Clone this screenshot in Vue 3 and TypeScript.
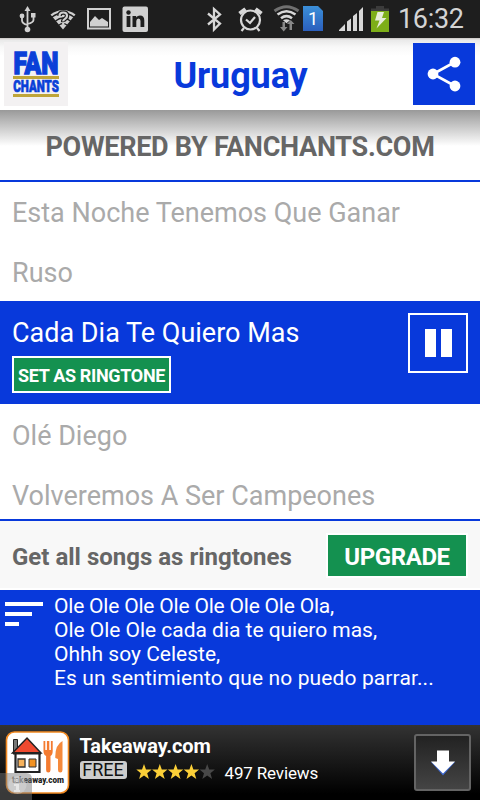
<script setup lang="ts">
interface Song {
  title: string
  active?: boolean
}

const songs: Song[] = [
  { title: 'Esta Noche Tenemos Que Ganar' },
  { title: 'Ruso' },
  { title: 'Cada Dia Te Quiero Mas', active: true },
  { title: 'Olé Diego' },
  { title: 'Volveremos A Ser Campeones' },
]

const lyrics: string[] = [
  'Ole Ole Ole Ole Ole Ole Ole Ola,',
  'Ole Ole Ole cada dia te quiero mas,',
  'Ohhh soy Celeste,',
  'Es un sentimiento que no puedo parrar...',
]

const rating = 4
</script>

<template>
  <div class="screen">
    <div class="status">
      <svg class="status-icons" width="480" height="38" viewBox="0 0 480 38">
        <g fill="none" stroke="#d0d0d0" stroke-width="1.800">
          <path d="M27.500 10V30M22 17v3.500q0 3 5.500 4.500M33.500 17v3q0 2.500-6 4" />
        </g>
        <g fill="#d0d0d0">
          <path d="M27.500 6l3 5h-6z" />
          <circle cx="22" cy="16" r="2.400" />
          <path d="M31 13h4.500v4.500H31z" />
          <circle cx="27.500" cy="29.500" r="2.800" />
        </g>
        <path d="M50.500 14.500Q63 5.500 75.500 14.500L63 29.500z" fill="#d0d0d0" />
        <path d="M52 17q11-8 22 0M55.500 21q7.500-6 15 0M59 25q4-3 8 0" fill="none" stroke="#1e1e1e" stroke-width="1.300" />
        <path d="M59.500 16q0-3.500 3.800-3.500t3.700 3.200q0 2-2 3.200t-1.800 3" fill="none" stroke="#1e1e1e" stroke-width="4.500" />
        <path d="M59.500 16q0-3.500 3.800-3.500t3.700 3.200q0 2-2 3.200t-1.800 2.500M63.200 23v2.500" fill="none" stroke="#d0d0d0" stroke-width="2.200" />
        <rect x="88" y="9" width="22" height="19.500" fill="none" stroke="#d0d0d0" stroke-width="2" />
        <path d="M90 26.500V22l5-6 4 4 3-2 6 4v4.500z" fill="#d0d0d0" />
        <rect x="122.500" y="6.500" width="25.500" height="25.500" rx="2" fill="#d0d0d0" />
        <g fill="#1e1e1e">
          <circle cx="128.500" cy="12.500" r="2.200" />
          <path d="M126.600 16h3.800v11h-3.800zM132.500 16h3.700v1.500q1.300-2 3.800-2 4.300 0 4.300 5V27h-3.800v-6q0-2.500-2-2.500t-2.200 2.500v6h-3.800z" />
        </g>
        <path d="M208 13.500l12 10-6 6V9l6 5.500-12 10" fill="none" stroke="#d8d8d8" stroke-width="2.300" />
        <g fill="none" stroke="#d8d8d8" stroke-width="2.200">
          <circle cx="250.500" cy="20" r="9.500" />
          <path d="M246 19.500l4 3.500 5-6M244 28l-2.500 3M257 28l2.500 3" />
          <path d="M239.500 13.500l6-4.500M261.500 13.500l-6-4.500" stroke-width="4" />
        </g>
        <g fill="none">
          <path d="M274.500 11Q286.500 2.500 298.500 11" stroke="#707070" stroke-width="3" />
          <path d="M277.500 14.500Q286.500 8 295.500 14.500M281 18.300Q286.500 14 292 18.300" stroke="#d8d8d8" stroke-width="2.600" />
        </g>
        <path d="M283 20.300q3.500-2 7 0l-3.500 3z" fill="#d8d8d8" />
        <path d="M282.500 22h2.500v5h2.500l-3.800 4.500L280 27h2.500zM289.500 30h2.500v-6h2.500l-3.800-4-3.700 4h2.500z" fill="#888" />
        <defs>
          <linearGradient id="sim" x1="0" y1="0" x2="0" y2="1">
            <stop offset="0" stop-color="#3b8fd8" />
            <stop offset="1" stop-color="#2b5fbd" />
          </linearGradient>
        </defs>
        <path d="M303 6h15l5 5v20h-20z" fill="url(#sim)" />
        <text x="313" y="25" class="sim-text">1</text>
        <path d="M339 31v-1l6-6v7zM347 31v-9.500l4-3V31zM353 31V16l4-3v18zM359 31V11l4-4v24z" fill="#d8d8d8" />
        <path d="M376 6h8v3h-8z" fill="#3c3c3c" />
        <path d="M371 8.500h18v3h-18z" fill="#3c3c3c" />
        <path d="M371 11h18v21h-18z" fill="#7dae18" />
        <path d="M377.500 12h6.500l-2 6h4.500l-10 10.500 3-8H375z" fill="#e6ecd8" />
        <text x="398" y="27.800" textLength="66" class="clock">16:32</text>
      </svg>
    </div>

    <header class="header">
      <svg class="logo" width="64" height="64" viewBox="0 0 64 64">
        <rect width="64" height="64" fill="#f3f1f2" />
        <text x="9.500" y="31.500" textLength="45" lengthAdjust="spacingAndGlyphs" class="logo-fan">FAN</text>
        <path d="M9 34h46v3H9zM9 52h46v3H9z" fill="#bfa53a" />
        <text x="9.300" y="50" textLength="45.500" lengthAdjust="spacingAndGlyphs" class="logo-chants">CHANTS</text>
      </svg>
      <h1 class="title">Uruguay</h1>
      <button class="share" aria-label="Share">
        <svg width="62" height="62" viewBox="0 0 62 62">
          <path d="M42 19L20 31l22 12" fill="none" stroke="#fff" stroke-width="2.600" />
          <g fill="#fff">
            <circle cx="42" cy="19.200" r="5.400" />
            <circle cx="20" cy="31" r="5.400" />
            <circle cx="42" cy="43" r="5.400" />
          </g>
        </svg>
      </button>
    </header>

    <div class="powered"><span>POWERED BY FANCHANTS.COM</span></div>

    <ul class="songs">
      <li v-for="song in songs" :key="song.title" class="song" :class="{ active: song.active }">
        <div class="song-main">
          <span class="song-title">{{ song.title }}</span>
          <button v-if="song.active" class="ringtone"><span>SET AS RINGTONE</span></button>
        </div>
        <button v-if="song.active" class="pause" aria-label="Pause">
          <i></i><i></i>
        </button>
      </li>
    </ul>

    <div class="upgrade-bar">
      <span class="upgrade-text">Get all songs as ringtones</span>
      <button class="upgrade"><span>UPGRADE</span></button>
    </div>

    <section class="lyrics">
      <div class="lines-icon"><i></i><i></i><i></i></div>
      <div class="lyric-text">
        <p v-for="line in lyrics" :key="line">{{ line }}</p>
      </div>
    </section>

    <footer class="ad">
      <svg class="ad-icon" width="70" height="75" viewBox="0 0 70 75">
        <rect x="6.500" y="7" width="62" height="61" rx="8" fill="#fff" stroke="#f28a22" stroke-width="1.600" />
        <path d="M13.500 14.500h4v8l-4 4z" fill="#777" stroke="#222" />
        <path d="M12.500 28L27 13l14 15z" fill="#ef4a30" stroke="#222" stroke-width="1.500" />
        <path d="M15.500 28h24v19h-24z" fill="#fff" stroke="#222" stroke-width="2.200" />
        <path d="M13 28.500h28" stroke="#222" stroke-width="2" />
        <path d="M18 34h7v8h-7z" fill="#f7b25c" stroke="#333" stroke-width="1.300" />
        <path d="M29 34h7v8h-7z" fill="#f29222" stroke="#333" stroke-width="1" />
        <path d="M43.500 16h1.800v9h1.600v-9h2.400v9h1.600v-9h1.800v10q0 4-2.200 5v14q0 2.500-2.200 2.500t-2.200-2.500V31q-2.600-1-2.600-5z" fill="#f47b30" />
        <path d="M62.500 16V45q0 2.500-2.200 2.500T58 45V34l-2.700-1q-.5-13 7.200-17z" fill="#f58a3c" />
        <text x="12" y="57.500" textLength="52" lengthAdjust="spacingAndGlyphs" class="brand">takeaway.com</text>
        <path d="M0 48h26q6 0 6 6v21H0z" fill="#777" opacity=".48" />
        <circle cx="17.500" cy="60" r="9" fill="#ddd" opacity=".45" />
        <path d="M15.500 54h3v3h-3zM14 59h5v6h1v2h-6v-2h2v-4h-2z" fill="#fff" opacity=".5" />
      </svg>
      <div class="ad-info">
        <div class="ad-name">Takeaway.com</div>
        <div class="ad-meta">
          <span class="free"><span>FREE</span></span>
          <svg class="stars" width="80" height="16" viewBox="0 0 80 16">
            <path
              v-for="n in 5"
              :key="n"
              d="M8 0l2 5.600h5.700l-4.500 3.600 1.700 5.800L8 11.500 3.100 15l1.700-5.800L.3 5.600H6z"
              :transform="`translate(${(n - 1) * 15.8} 0)`"
              :fill="n <= rating ? '#fbcf38' : '#484848'"
            />
          </svg>
          <span class="reviews">497 Reviews</span>
        </div>
      </div>
      <button class="download" aria-label="Download">
        <svg width="24" height="26" viewBox="0 0 24 26">
          <path d="M6 1h12v11h6L12 25.500 0 12h6z" fill="#3b65cc" />
          <path d="M6 0.500h12v11h6L12 23.500 0 11.500h6z" fill="#fff" />
        </svg>
      </button>
    </footer>
  </div>
</template>

<style>
body {
  background: #fff;
}
</style>

<style scoped>
.screen {
  width: 480px;
  height: 800px;
  overflow: hidden;
  display: flex;
  flex-direction: column;
  background: #fff;
  font-family: Roboto, sans-serif;
}
button {
  font-family: inherit;
  border: 0;
  padding: 0;
  margin: 0;
  box-sizing: border-box;
}
.status {
  height: 38px;
  background: #1e1e1e;
  flex: none;
}
.status-icons {
  display: block;
}
.sim-text {
  font-size: 18px;
  fill: #fff;
  text-anchor: middle;
}
.clock {
  font-size: 27px;
  fill: #d4d4d4;
}
.header {
  height: 72px;
  flex: none;
  box-sizing: border-box;
  padding: 4px 5px 0 4px;
  display: flex;
  justify-content: space-between;
  align-items: flex-start;
  background: linear-gradient(#c9c5c3 0, #e9e9e9 2px, #f8f8f8 9px, #fff 18px);
}
.logo {
  overflow: visible;
}
.logo-fan {
  font-weight: 900;
  font-size: 31.5px;
  fill: #0a40d8;
  stroke: #0a40d8;
  stroke-width: 1.4px;
}
.logo-chants {
  font-weight: 900;
  font-size: 16px;
  fill: #0a40d8;
  stroke: #0a40d8;
  stroke-width: 0.7px;
}
.title {
  margin: 0;
  line-height: 69px;
  font-size: 36px;
  font-weight: 700;
  letter-spacing: -0.1px;
  color: #0839db;
}
.share {
  margin-top: 1px;
  width: 62px;
  height: 62px;
  background: #0839db;
}
.share svg {
  display: block;
}
.powered {
  height: 72px;
  flex: none;
  box-sizing: border-box;
  border-bottom: 2px solid #0839db;
  background: linear-gradient(#999 0, #fff 36px);
  text-align: center;
  font-size: 27px;
  line-height: 75px;
  font-weight: 700;
  letter-spacing: -0.28px;
  color: #666;
}
.songs {
  list-style: none;
  margin: 0;
  padding: 0;
  height: 339px;
  box-sizing: border-box;
  border-bottom: 2px solid #0839db;
  flex: none;
  overflow: hidden;
}
.song {
  height: 60px;
  box-sizing: border-box;
  padding: 0 12px;
  display: flex;
  justify-content: space-between;
  color: #aaa;
}
.song:first-child {
  height: 59px;
}
.song-main {
  display: flex;
  flex-direction: column;
  align-items: flex-start;
}
.song-title {
  font-size: 27px;
  line-height: 64px;
  white-space: nowrap;
}
.song:first-child .song-title {
  line-height: 62px;
}
.song.active {
  height: 103px;
  background: #0839db;
  color: #fff;
}
.active .song-title {
  line-height: 65px;
  height: 55px;
}
.ringtone {
  width: 159px;
  height: 37px;
  border: 2px solid #fff;
  background: #149150;
  color: #fff;
  font-size: 18px;
  font-weight: 700;
  letter-spacing: -0.33px;
  padding-top: 2px;
  white-space: nowrap;
}
.pause {
  margin-top: 12px;
  width: 60px;
  height: 60px;
  border: 2px solid #fff;
  background: transparent;
  display: flex;
  justify-content: center;
  align-items: center;
  gap: 5px;
}
.pause i {
  width: 11px;
  height: 28px;
  background: #fff;
}
.upgrade-bar {
  height: 69px;
  flex: none;
  box-sizing: border-box;
  border-bottom: 2px solid #fff;
  background: #f8f8f8;
  padding: 0 12px;
  display: flex;
  justify-content: space-between;
  align-items: center;
}
.upgrade-text {
  font-size: 24px;
  font-weight: 700;
  color: #666;
  padding-top: 4px;
}
.upgrade {
  margin-top: 2px;
  width: 142px;
  height: 45px;
  border: 2px solid #fff;
  background: #149150;
  color: #fff;
  font-size: 24px;
  font-weight: 700;
  letter-spacing: -0.4px;
  padding-top: 2px;
}
.lyrics {
  height: 135px;
  flex: none;
  background: #0839db;
  display: flex;
  box-sizing: border-box;
  padding: 4px 0 0 5px;
  color: #fff;
}
.lines-icon {
  width: 49px;
  padding-top: 8px;
  display: flex;
  flex-direction: column;
  gap: 6px;
}
.lines-icon i {
  height: 4px;
  width: 38px;
  background: #fff;
}
.lines-icon i:nth-child(2) {
  width: 27px;
}
.lines-icon i:nth-child(3) {
  width: 14px;
}
.lyric-text p {
  margin: 0;
  font-size: 21px;
  line-height: 24px;
  white-space: nowrap;
}
.lyric-text p:nth-child(1) {
  letter-spacing: -0.2px;
}
.lyric-text p:nth-child(2) {
  letter-spacing: -0.03px;
}
.lyric-text p:nth-child(4) {
  letter-spacing: 0.12px;
}
.ad {
  height: 75px;
  flex: none;
  display: flex;
  background: linear-gradient(#333, #000 92%);
  color: #fff;
}
.ad-icon {
  flex: none;
}
.brand {
  font-size: 9px;
  font-weight: 900;
  fill: #222;
}
.ad-info {
  flex: 1;
  padding: 9px 0 0 9.500px;
}
.ad-name {
  font-size: 20px;
  line-height: 24px;
  font-weight: 700;
  letter-spacing: -0.1px;
}
.ad-meta {
  display: flex;
  align-items: flex-start;
}
.free {
  margin-top: 3px;
  width: 47px;
  height: 18px;
  border-radius: 3px;
  background: #ccc;
  color: #111;
  font-size: 18px;
  line-height: 18px;
  text-align: center;
}
.stars {
  margin: 6px 0 0 9px;
}
.reviews {
  margin-left: 9px;
  font-size: 17px;
  line-height: 30px;
  letter-spacing: -0.15px;
}
.download {
  margin: 9px 9px 0 0;
  width: 57px;
  height: 57px;
  border: 2px solid #646464;
  border-radius: 3px;
  background: linear-gradient(#222, #444);
  display: flex;
  align-items: center;
  justify-content: center;
}
</style>
